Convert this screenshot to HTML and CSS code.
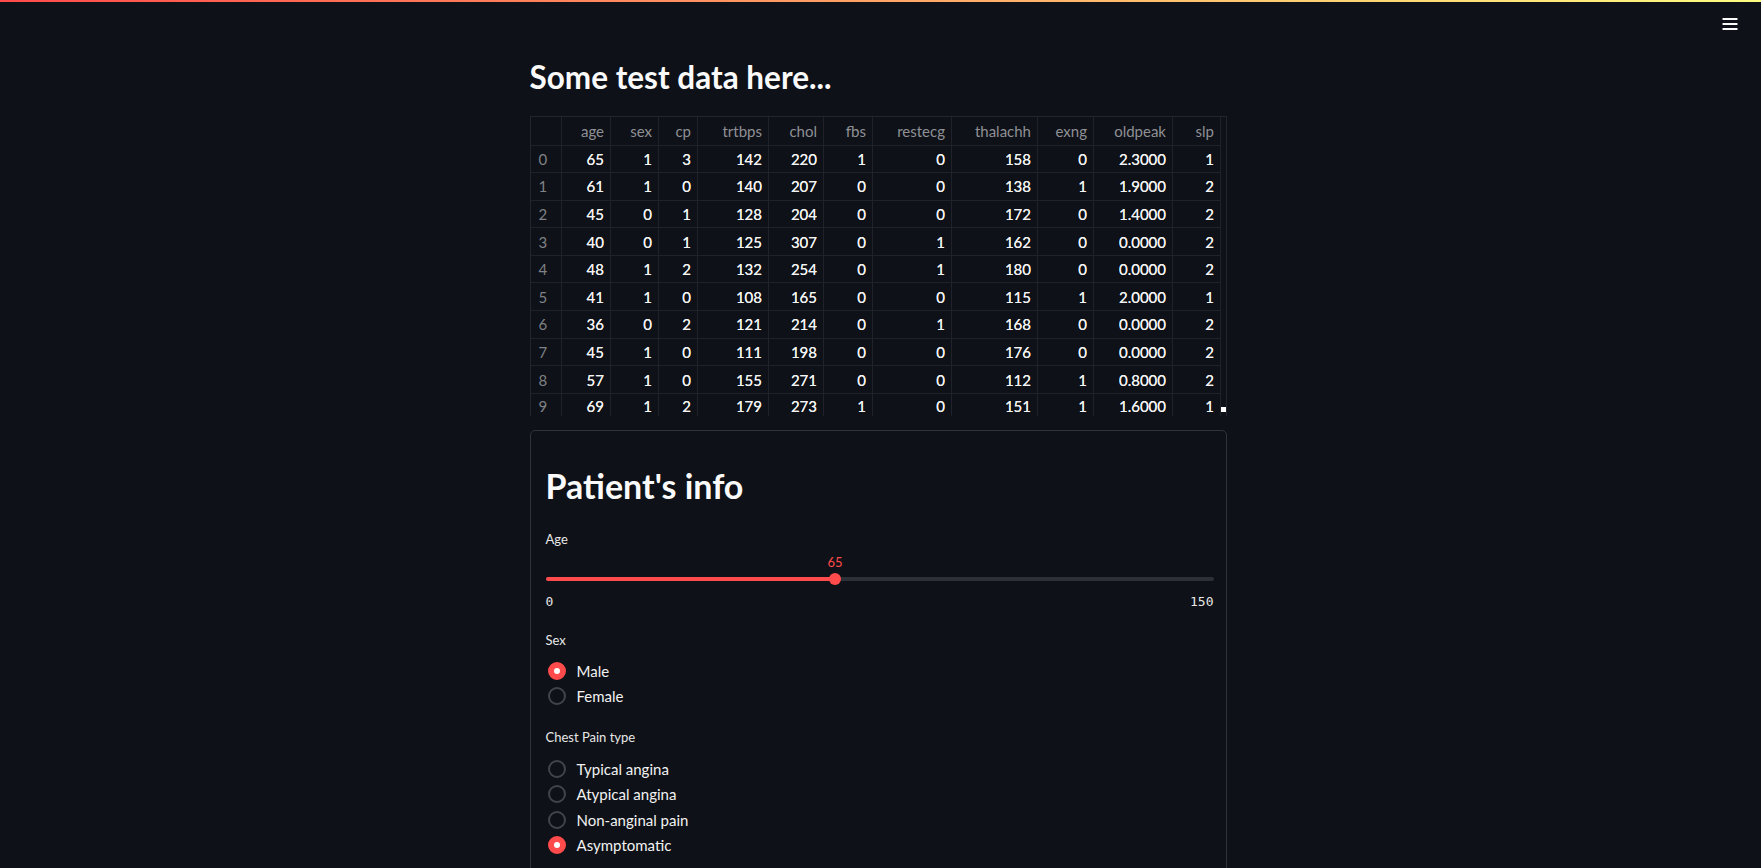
FILE: index.html
```html
<!DOCTYPE html>
<html lang="en">
<head>
<meta charset="utf-8">
<title>Streamlit</title>
<link rel="stylesheet" href="styles.css">
</head>
<body>
<div class="decoration"></div>
<header class="toolbar">
  <button class="menu-btn" aria-label="Menu">
    <svg width="16" height="14" viewBox="0 0 16 14"><rect x="0.5" y="1" width="15" height="2" rx="0.5" fill="#fafafa"/><rect x="0.5" y="6" width="15" height="2" rx="0.5" fill="#fafafa"/><rect x="0.5" y="11" width="15" height="2" rx="0.5" fill="#fafafa"/></svg>
  </button>
</header>
<main class="main">
  <h1 class="title">Some test data here...</h1>

  <div class="df">
    <table class="grid">
      <colgroup>
        <col style="width:31px"><col style="width:49px"><col style="width:48px"><col style="width:39px"><col style="width:71px"><col style="width:55px"><col style="width:49px"><col style="width:79px"><col style="width:86px"><col style="width:56px"><col style="width:79px"><col style="width:48px">
      </colgroup>
      <thead>
        <tr><th class="idx"></th><th>age</th><th>sex</th><th>cp</th><th>trtbps</th><th>chol</th><th>fbs</th><th>restecg</th><th>thalachh</th><th>exng</th><th>oldpeak</th><th>slp</th></tr>
      </thead>
      <tbody>
        <tr><td class="idx">0</td><td>65</td><td>1</td><td>3</td><td>142</td><td>220</td><td>1</td><td>0</td><td>158</td><td>0</td><td>2.3000</td><td>1</td></tr>
        <tr><td class="idx">1</td><td>61</td><td>1</td><td>0</td><td>140</td><td>207</td><td>0</td><td>0</td><td>138</td><td>1</td><td>1.9000</td><td>2</td></tr>
        <tr><td class="idx">2</td><td>45</td><td>0</td><td>1</td><td>128</td><td>204</td><td>0</td><td>0</td><td>172</td><td>0</td><td>1.4000</td><td>2</td></tr>
        <tr><td class="idx">3</td><td>40</td><td>0</td><td>1</td><td>125</td><td>307</td><td>0</td><td>1</td><td>162</td><td>0</td><td>0.0000</td><td>2</td></tr>
        <tr><td class="idx">4</td><td>48</td><td>1</td><td>2</td><td>132</td><td>254</td><td>0</td><td>1</td><td>180</td><td>0</td><td>0.0000</td><td>2</td></tr>
        <tr><td class="idx">5</td><td>41</td><td>1</td><td>0</td><td>108</td><td>165</td><td>0</td><td>0</td><td>115</td><td>1</td><td>2.0000</td><td>1</td></tr>
        <tr><td class="idx">6</td><td>36</td><td>0</td><td>2</td><td>121</td><td>214</td><td>0</td><td>1</td><td>168</td><td>0</td><td>0.0000</td><td>2</td></tr>
        <tr><td class="idx">7</td><td>45</td><td>1</td><td>0</td><td>111</td><td>198</td><td>0</td><td>0</td><td>176</td><td>0</td><td>0.0000</td><td>2</td></tr>
        <tr><td class="idx">8</td><td>57</td><td>1</td><td>0</td><td>155</td><td>271</td><td>0</td><td>0</td><td>112</td><td>1</td><td>0.8000</td><td>2</td></tr>
        <tr class="last"><td class="idx">9</td><td>69</td><td>1</td><td>2</td><td>179</td><td>273</td><td>1</td><td>0</td><td>151</td><td>1</td><td>1.6000</td><td>1</td></tr>
      </tbody>
    </table>
    <div class="scroll-corner"></div>
  </div>

  <section class="card">
    <h2 class="card-title">Patient's info</h2>

    <div class="field">
      <div class="label">Age</div>
      <div class="slider">
        <div class="slider-value-row">
          <span class="slider-value" style="left:43.333%">65</span>
        </div>
        <div class="slider-track-wrap">
          <div class="slider-track">
            <div class="slider-fill" style="width:43.333%"></div>
            <div class="slider-thumb" style="left:43.333%"></div>
          </div>
        </div>
        <div class="slider-ticks"><span>0</span><span>150</span></div>
      </div>
    </div>

    <div class="field field-radio">
      <div class="label">Sex</div>
      <div class="radio-group">
        <div class="radio checked"><span class="dot"></span><span class="radio-text">Male</span></div>
        <div class="radio"><span class="dot"></span><span class="radio-text">Female</span></div>
      </div>
    </div>

    <div class="field field-radio2">
      <div class="label">Chest Pain type</div>
      <div class="radio-group">
        <div class="radio"><span class="dot"></span><span class="radio-text">Typical angina</span></div>
        <div class="radio"><span class="dot"></span><span class="radio-text">Atypical angina</span></div>
        <div class="radio"><span class="dot"></span><span class="radio-text">Non-anginal pain</span></div>
        <div class="radio checked"><span class="dot"></span><span class="radio-text">Asymptomatic</span></div>
      </div>
    </div>
  </section>
</main>
</body>
</html>
```

FILE: styles.css
```css
* { box-sizing: border-box; }

html, body {
  margin: 0;
  padding: 0;
  background: #0e1117;
  color: #fafafa;
  font-family: Lato, "Open Sans", "Noto Sans", sans-serif;
  overflow: hidden;
  height: 100%;
}

.decoration {
  height: 2px;
  background: linear-gradient(90deg, #ff4b4b, #fffd80);
}

.toolbar {
  height: 44px;
  display: flex;
  justify-content: flex-end;
  align-items: center;
  padding-right: 23px;
}

.menu-btn {
  background: none;
  border: 0;
  padding: 0;
  width: 16px;
  height: 14px;
  display: flex;
  margin-top: -1px;
  cursor: pointer;
}

.main {
  width: 697px;
  margin-left: calc(50% - 351px);
}

.title {
  margin: 11px 0 19px;
  font-size: 31.5px;
  line-height: 40px;
  font-weight: 700;
  color: #fafafa;
}

/* dataframe */
.df {
  position: relative;
  height: 300px;
  overflow: hidden;
  border: 1px solid #22252c;
  border-bottom: 0;
  width: 697px;
}

.grid {
  border-collapse: collapse;
  table-layout: fixed;
  width: 690px;
  font-size: 15px;
}

.grid th, .grid td {
  padding: 0 6px 0 8px;
  text-align: right;
  border-right: 1px solid #1f2229;
  border-bottom: 1px solid #1f2229;
  white-space: nowrap;
  overflow: hidden;
}

.grid th {
  font-weight: 400;
  color: #8e9095;
  height: 28px;
}

.grid td {
  color: #f3f3f3;
  height: 27.6px;
  text-shadow: 0 0 0.4px #f3f3f3;
}

.grid .last td {
  vertical-align: top;
  padding-top: 3px;
}

.grid .idx {
  text-align: left;
  color: #7f8186;
  text-shadow: none;
}

.scroll-corner {
  position: absolute;
  right: 0;
  bottom: 4px;
  width: 5px;
  height: 5px;
  background: #ffffff;
}

/* card */
.card {
  margin-top: 14px;
  border: 1px solid #30333b;
  border-radius: 5px;
  padding: 16px 12px 40px 15px;
  height: 460px;
}

.card-title {
  margin: 0;
  padding-top: 19px;
  font-size: 34px;
  line-height: 40px;
  font-weight: 700;
  color: #fafafa;
}

.field { margin-top: 25px; }

.label {
  font-size: 13px;
  line-height: 16px;
  color: #e8e8e8;
}

/* slider */
.slider { position: relative; }

.slider-value-row {
  position: relative;
  height: 25px;
}

.slider-value {
  position: absolute;
  top: 7px;
  transform: translateX(-50%);
  font-size: 13px;
  line-height: 16px;
  color: #ff4b4b;
}

.slider-track-wrap {
  height: 14px;
  display: flex;
  align-items: center;
}

.slider-track {
  position: relative;
  width: 100%;
  height: 4px;
  border-radius: 2px;
  background: #2e3038;
}

.slider-fill {
  height: 100%;
  border-radius: 2px;
  background: #ff4b4b;
}

.slider-thumb {
  position: absolute;
  top: 50%;
  width: 12px;
  height: 12px;
  border-radius: 50%;
  background: #ff4b4b;
  transform: translate(-50%, -50%);
}

.slider-ticks {
  display: flex;
  justify-content: space-between;
  margin-top: 8px;
  font-family: "DejaVu Sans Mono", "Liberation Mono", monospace;
  font-size: 13px;
  line-height: 16px;
  color: #e6e6e6;
}

/* radios */
.field-radio { margin-top: 22px; }
.field-radio2 { margin-top: 20px; }

.radio-group {
  margin-top: 10px;
  display: flex;
  flex-direction: column;
}

.field-radio2 .radio-group { margin-top: 11px; }

.radio {
  height: 25.5px;
  display: flex;
  align-items: center;
  gap: 11px;
}

.dot {
  width: 18px;
  height: 18px;
  border-radius: 50%;
  border: 2px solid #41444c;
  margin-left: 2px;
  flex: none;
  display: flex;
  align-items: center;
  justify-content: center;
}

.radio.checked .dot {
  background: #ff4b4b;
  border-color: #ff4b4b;
}

.radio.checked .dot::after {
  content: "";
  width: 6px;
  height: 6px;
  border-radius: 50%;
  background: #ffffff;
}

.radio-text {
  font-size: 15px;
  line-height: 20px;
  color: #f2f2f2;
}
```
